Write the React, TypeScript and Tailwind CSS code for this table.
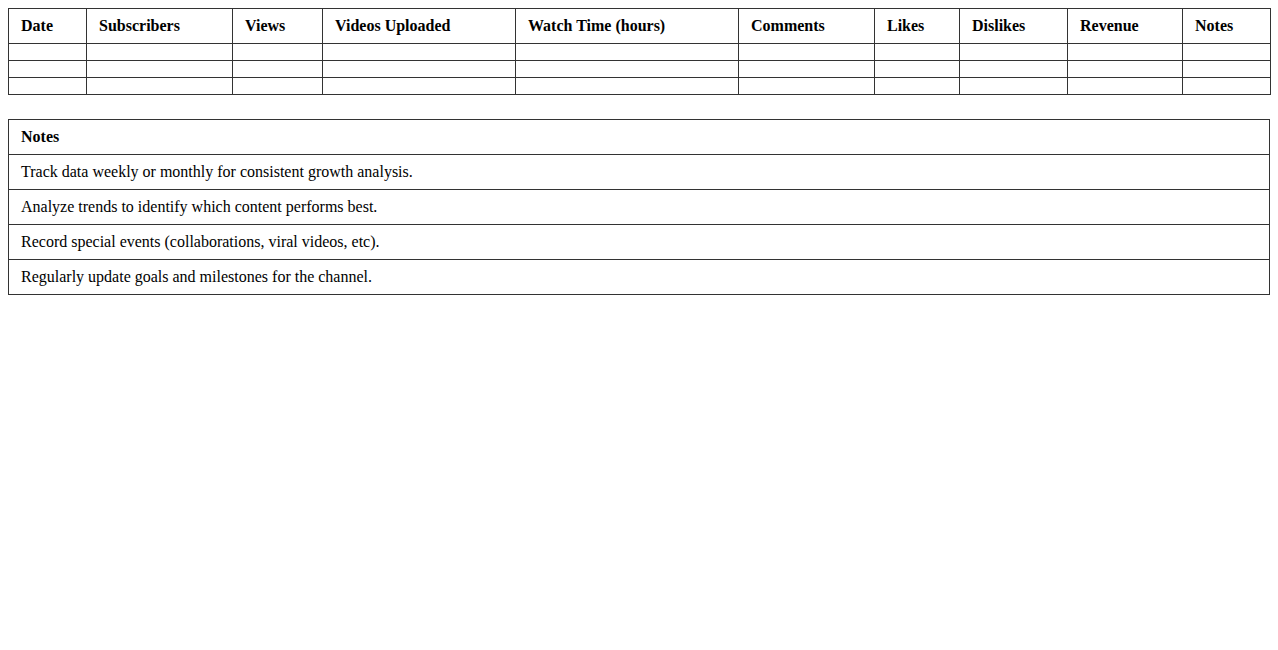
import React from "react";

const headers: [string, string][] = [
  ["Date", "w-[78px]"],
  ["Subscribers", "w-[146px]"],
  ["Views", "w-[90px]"],
  ["Videos Uploaded", "w-[193px]"],
  ["Watch Time (hours)", "w-[223px]"],
  ["Comments", "w-[136px]"],
  ["Likes", "w-[85px]"],
  ["Dislikes", "w-[108px]"],
  ["Revenue", "w-[115px]"],
  ["Notes", "w-[88px]"],
];

const notes = [
  "Track data weekly or monthly for consistent growth analysis.",
  "Analyze trends to identify which content performs best.",
  "Record special events (collaborations, viral videos, etc).",
  "Regularly update goals and milestones for the channel.",
];

export default function App() {
  return (
    <div className="min-h-[650px] bg-white p-2 text-black text-[16px] leading-[18px] font-['Liberation_Serif','Times_New_Roman',serif]">
      <table className="w-full table-fixed border-collapse border border-[#333]">
        <colgroup>
          {headers.map(([h, w]) => (
            <col key={h} className={w} />
          ))}
        </colgroup>
        <thead>
          <tr>
            {headers.map(([h]) => (
              <th key={h} className="border border-[#333] px-3 py-2 text-left font-bold">
                {h}
              </th>
            ))}
          </tr>
        </thead>
        <tbody>
          {[0, 1, 2].map((r) => (
            <tr key={r}>
              {headers.map(([h]) => (
                <td key={h} className="border border-[#333] px-3 py-2"></td>
              ))}
            </tr>
          ))}
        </tbody>
      </table>

      <table className="mt-6 w-full border-collapse border border-[#333]">
        <thead>
          <tr>
            <th className="border border-[#333] px-3 py-2 text-left font-bold">Notes</th>
          </tr>
        </thead>
        <tbody>
          {notes.map((n) => (
            <tr key={n}>
              <td className="border border-[#333] px-3 py-2">{n}</td>
            </tr>
          ))}
        </tbody>
      </table>
    </div>
  );
}
